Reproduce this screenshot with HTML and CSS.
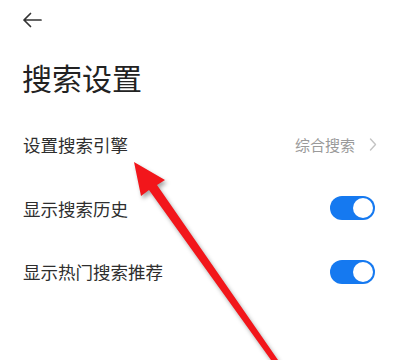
FILE: index.html
```html
<!DOCTYPE html>
<html lang="zh-CN">
<head>
    <meta charset="UTF-8">
    <meta name="viewport" content="width=device-width, initial-scale=1.0">
    <title>搜索设置</title>
    <link rel="stylesheet" href="styles.css">
</head>
<body>
    <div class="page">
        <div class="top-bar">
            <svg class="back-icon" width="20" height="16" viewBox="0 0 20 16">
                <path d="M19 8H2M8.5 1.5L2 8l6.5 6.5" fill="none" stroke="#333" stroke-width="1.7" stroke-linecap="round" stroke-linejoin="round"/>
            </svg>
        </div>

        <h1 class="title">搜索设置</h1>

        <div class="setting-row">
            <span class="setting-label">设置搜索引擎</span>
            <span class="setting-value">
                综合搜索
                <svg class="chevron" width="8" height="13" viewBox="0 0 8 13">
                    <path d="M1.5 1l5 5.5-5 5.5" fill="none" stroke="#c4c4c4" stroke-width="1.4" stroke-linecap="round" stroke-linejoin="round"/>
                </svg>
            </span>
        </div>

        <div class="setting-row">
            <span class="setting-label">显示搜索历史</span>
            <span class="switch"><span class="knob"></span></span>
        </div>

        <div class="setting-row">
            <span class="setting-label">显示热门搜索推荐</span>
            <span class="switch"><span class="knob"></span></span>
        </div>

        <!-- annotation arrow drawn over the screenshot -->
        <svg class="pointer-arrow" width="400" height="360" viewBox="0 0 400 360">
            <polygon points="134,162 165,180 157,185 278,360 271,360 149,190 141,196" fill="#f2161b"/>
        </svg>
    </div>
</body>
</html>
```

FILE: styles.css
```css
body {
    margin: 0;
    background: #fff;
    font-family: "Noto Sans CJK SC", "Noto Sans", sans-serif;
    color: #333;
}

.page {
    position: relative;
    width: 400px;
    height: 360px;
    overflow: hidden;
}

.top-bar {
    height: 40px;
    display: flex;
    align-items: center;
    padding-left: 22px;
}

.back-icon {
    display: block;
}

.title {
    margin: 0;
    height: 73px;
    display: flex;
    align-items: center;
    padding-left: 22px;
    font-size: 30px;
    font-weight: 400;
    color: #222;
}

.setting-row {
    height: 63.5px;
    display: flex;
    align-items: center;
    justify-content: space-between;
    padding: 0 23px 0 23px;
}

.setting-label {
    font-size: 17.5px;
    color: #2e2e2e;
}

.setting-value {
    display: flex;
    align-items: center;
    gap: 14px;
    font-size: 15px;
    color: #9a9a9a;
}

.chevron {
    display: block;
}

.switch {
    position: relative;
    width: 45px;
    height: 24px;
    margin-right: 2px;
    border-radius: 12px;
    background: #1579f0;
}

.knob {
    position: absolute;
    top: 2px;
    right: 2px;
    width: 20px;
    height: 20px;
    border-radius: 50%;
    background: #fff;
}

.pointer-arrow {
    position: absolute;
    left: 0;
    top: 0;
    filter: drop-shadow(2px 3px 2px rgba(0, 0, 0, 0.35));
}
```
